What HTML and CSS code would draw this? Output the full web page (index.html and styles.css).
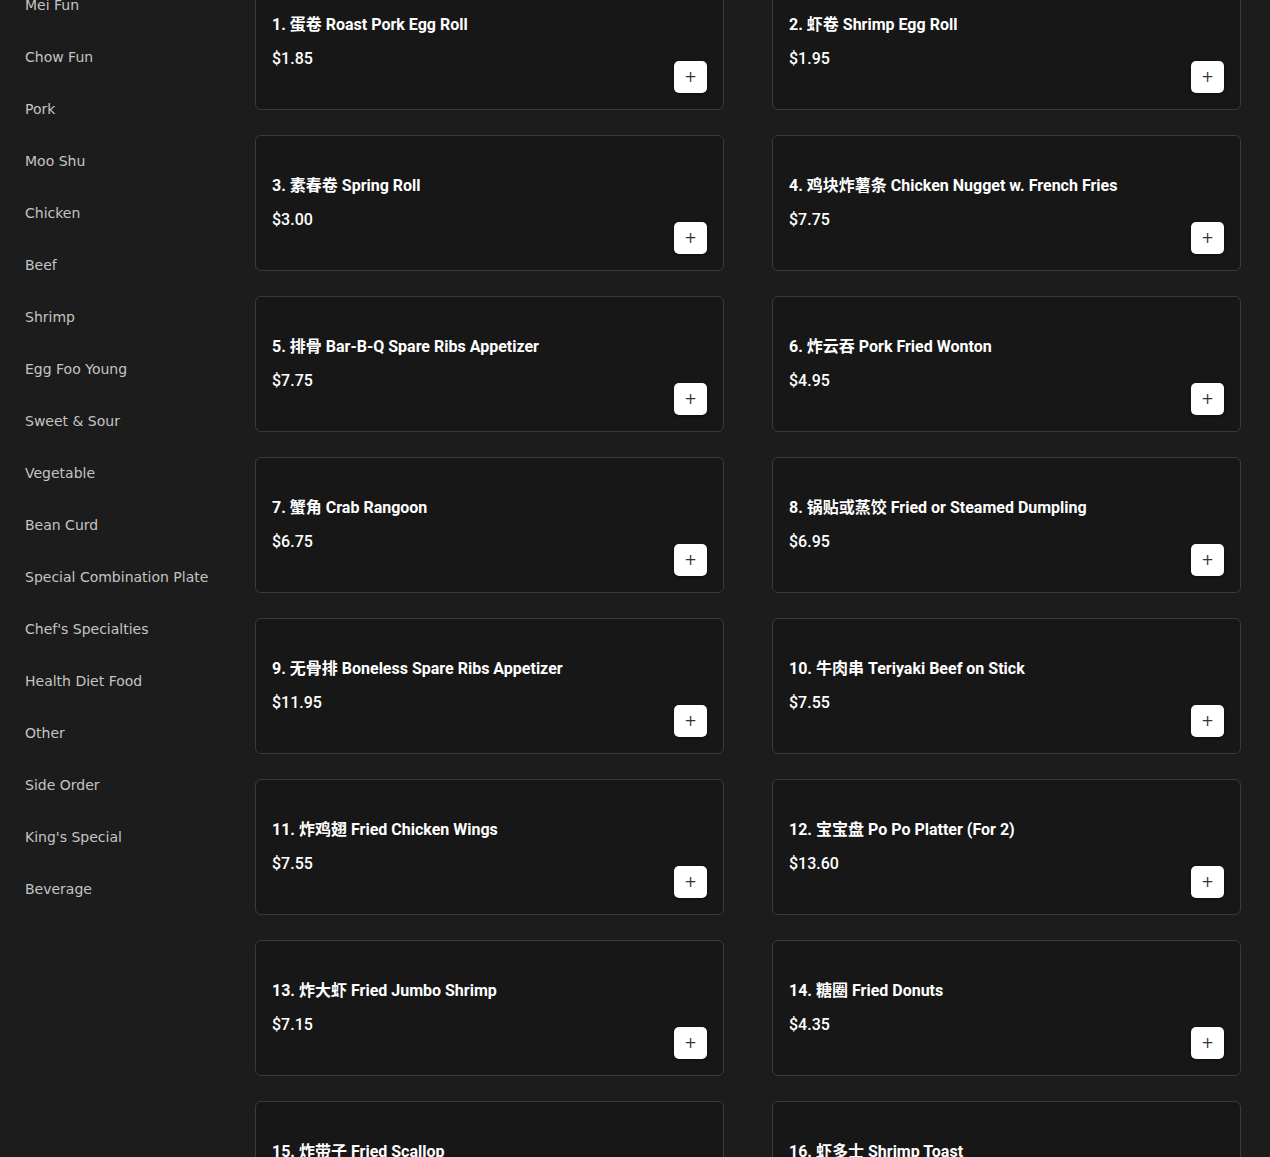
FILE: index.html
```html
<!DOCTYPE html>
<html lang="en">

<head>
    <meta charset="UTF-8">
    <meta name="viewport" content="width=device-width, initial-scale=1.0">
    <title>Menu</title>
    <link rel="stylesheet" href="styles.css">
</head>

<body>
    <div class="page">
        <nav class="sidebar">
            <a href="#">Mei Fun</a>
            <a href="#">Chow Fun</a>
            <a href="#">Pork</a>
            <a href="#">Moo Shu</a>
            <a href="#">Chicken</a>
            <a href="#">Beef</a>
            <a href="#">Shrimp</a>
            <a href="#">Egg Foo Young</a>
            <a href="#">Sweet &amp; Sour</a>
            <a href="#">Vegetable</a>
            <a href="#">Bean Curd</a>
            <a href="#">Special Combination Plate</a>
            <a href="#">Chef's Specialties</a>
            <a href="#">Health Diet Food</a>
            <a href="#">Other</a>
            <a href="#">Side Order</a>
            <a href="#">King's Special</a>
            <a href="#">Beverage</a>
        </nav>

        <main class="menu">
            <div class="item">
                <div class="info">
                    <h3>1. 蛋卷 Roast Pork Egg Roll</h3>
                    <p>$1.85</p>
                </div>
                <button class="add">+</button>
            </div>
            <div class="item">
                <div class="info">
                    <h3>2. 虾卷 Shrimp Egg Roll</h3>
                    <p>$1.95</p>
                </div>
                <button class="add">+</button>
            </div>
            <div class="item">
                <div class="info">
                    <h3>3. 素春卷 Spring Roll</h3>
                    <p>$3.00</p>
                </div>
                <button class="add">+</button>
            </div>
            <div class="item">
                <div class="info">
                    <h3>4. 鸡块炸薯条 Chicken Nugget w. French Fries</h3>
                    <p>$7.75</p>
                </div>
                <button class="add">+</button>
            </div>
            <div class="item">
                <div class="info">
                    <h3>5. 排骨 Bar-B-Q Spare Ribs Appetizer</h3>
                    <p>$7.75</p>
                </div>
                <button class="add">+</button>
            </div>
            <div class="item">
                <div class="info">
                    <h3>6. 炸云吞 Pork Fried Wonton</h3>
                    <p>$4.95</p>
                </div>
                <button class="add">+</button>
            </div>
            <div class="item">
                <div class="info">
                    <h3>7. 蟹角 Crab Rangoon</h3>
                    <p>$6.75</p>
                </div>
                <button class="add">+</button>
            </div>
            <div class="item">
                <div class="info">
                    <h3>8. 锅贴或蒸饺 Fried or Steamed Dumpling</h3>
                    <p>$6.95</p>
                </div>
                <button class="add">+</button>
            </div>
            <div class="item">
                <div class="info">
                    <h3>9. 无骨排 Boneless Spare Ribs Appetizer</h3>
                    <p>$11.95</p>
                </div>
                <button class="add">+</button>
            </div>
            <div class="item">
                <div class="info">
                    <h3>10. 牛肉串 Teriyaki Beef on Stick</h3>
                    <p>$7.55</p>
                </div>
                <button class="add">+</button>
            </div>
            <div class="item">
                <div class="info">
                    <h3>11. 炸鸡翅 Fried Chicken Wings</h3>
                    <p>$7.55</p>
                </div>
                <button class="add">+</button>
            </div>
            <div class="item">
                <div class="info">
                    <h3>12. 宝宝盘 Po Po Platter (For 2)</h3>
                    <p>$13.60</p>
                </div>
                <button class="add">+</button>
            </div>
            <div class="item">
                <div class="info">
                    <h3>13. 炸大虾 Fried Jumbo Shrimp</h3>
                    <p>$7.15</p>
                </div>
                <button class="add">+</button>
            </div>
            <div class="item">
                <div class="info">
                    <h3>14. 糖圈 Fried Donuts</h3>
                    <p>$4.35</p>
                </div>
                <button class="add">+</button>
            </div>
            <div class="item">
                <div class="info">
                    <h3>15. 炸带子 Fried Scallop</h3>
                    <p>$8.95</p>
                </div>
                <button class="add">+</button>
            </div>
            <div class="item">
                <div class="info">
                    <h3>16. 虾多士 Shrimp Toast</h3>
                    <p>$7.95</p>
                </div>
                <button class="add">+</button>
            </div>
        </main>
    </div>
</body>

</html>
```

FILE: styles.css
```css
html {
    background: #1c1c1c;
}

body {
    margin: 0;
    height: 1157px;
    overflow: hidden;
    font-family: Roboto, "Noto Sans CJK SC", sans-serif;
    color: #fff;
}

/* page is shown scrolled a little way down */
.page {
    display: flex;
    align-items: flex-start;
    margin-top: -26px;
}

.sidebar {
    width: 231px;
    flex-shrink: 0;
    display: flex;
    flex-direction: column;
    padding-top: 5px;
}

.sidebar a {
    display: block;
    padding: 16px 0 16px 25px;
    line-height: 20px;
    font-family: "DejaVu Sans", "Noto Sans CJK SC", sans-serif;
    font-size: 14px;
    color: #c4c4c4;
    text-decoration: none;
}

.menu {
    flex: 1;
    display: grid;
    grid-template-columns: 469px 469px;
    column-gap: 48px;
    row-gap: 25px;
    padding: 0 0 0 24px;
}

.item {
    box-sizing: border-box;
    height: 136px;
    padding: 16px;
    display: flex;
    align-items: center;
    background: #171717;
    border: 1px solid #3a3a3a;
    border-radius: 6px;
}

.info {
    flex: 1;
}

.info h3 {
    margin: 0;
    font-size: 16px;
    font-weight: 700;
    line-height: 24px;
}

.info p {
    margin: 10px 0 0;
    font-size: 16px;
    font-weight: 500;
    line-height: 24px;
}

.add {
    align-self: flex-end;
    width: 33px;
    height: 32px;
    padding: 0;
    border: none;
    border-radius: 5px;
    background: #fff;
    box-shadow: 0 1px 3px rgba(0, 0, 0, .5);
    font-family: "DejaVu Sans", sans-serif;
    font-size: 15px;
    line-height: 32px;
    color: #333;
    cursor: pointer;
}
```
